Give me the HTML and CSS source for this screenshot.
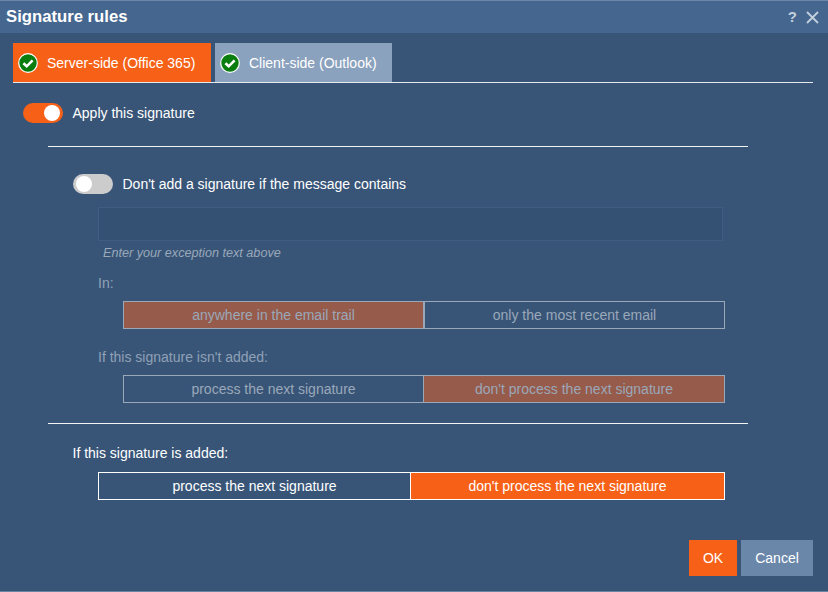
FILE: index.html
```html
<!DOCTYPE html>
<html lang="en">
<head>
<meta charset="utf-8">
<title>Signature rules</title>
<link rel="stylesheet" href="styles.css">
</head>
<body>
<div class="dialog">
  <header class="titlebar">
    <h1 class="title">Signature rules</h1>
    <div class="title-actions">
      <span class="help">?</span>
      <svg class="close" width="13" height="13" viewBox="0 0 13 13"><path d="M1 1L12 12M12 1L1 12" stroke="#c3cfdd" stroke-width="1.8" fill="none"/></svg>
    </div>
  </header>
  <main class="content">
    <nav class="tabs">
      <div class="tab tab-active">
        <svg class="check" width="20" height="20" viewBox="0 0 20 20"><circle cx="10" cy="10" r="9.3" fill="#0a7d0f" stroke="#fff" stroke-width="1.2"/><path d="M5.4 10.2L8.7 13.3L14.6 7.4" stroke="#fff" stroke-width="2.6" fill="none"/></svg>
        <span>Server-side (Office 365)</span>
      </div>
      <div class="tab tab-idle">
        <svg class="check" width="20" height="20" viewBox="0 0 20 20"><circle cx="10" cy="10" r="9.3" fill="#0a7d0f" stroke="#fff" stroke-width="1.2"/><path d="M5.4 10.2L8.7 13.3L14.6 7.4" stroke="#fff" stroke-width="2.6" fill="none"/></svg>
        <span>Client-side (Outlook)</span>
      </div>
    </nav>
    <div class="toggle-row apply-row">
      <span class="toggle toggle-on"><span class="knob"></span></span>
      <span>Apply this signature</span>
    </div>
    <hr class="rule rule-first">
    <section class="exception">
      <div class="toggle-row">
        <span class="toggle toggle-off"><span class="knob"></span></span>
        <span>Don't add a signature if the message contains</span>
      </div>
      <div class="exception-input"></div>
      <p class="hint">Enter your exception text above</p>
      <p class="label label-dim label-in">In:</p>
      <div class="segments segments-dim seg-in">
        <div class="seg seg-a seg-selected">anywhere in the email trail</div>
        <div class="seg seg-b">only the most recent email</div>
      </div>
      <p class="label label-dim label-notadded">If this signature isn't added:</p>
      <div class="segments segments-dim seg-notadded">
        <div class="seg seg-a">process the next signature</div>
        <div class="seg seg-b seg-selected">don't process the next signature</div>
      </div>
    </section>
    <hr class="rule rule-second">
    <p class="label label-added">If this signature is added:</p>
    <div class="segments seg-added">
      <div class="seg seg-a">process the next signature</div>
      <div class="seg seg-b seg-selected">don't process the next signature</div>
    </div>
    <footer class="actions">
      <button class="btn btn-ok">OK</button>
      <button class="btn btn-cancel">Cancel</button>
    </footer>
  </main>
</div>
</body>
</html>
```
FILE: styles.css
```css
* { box-sizing: border-box; }
html, body { margin: 0; padding: 0; }
body {
  width: 828px;
  height: 592px;
  overflow: hidden;
  font-family: "Liberation Sans", Arial, sans-serif;
  font-size: 14px;
  color: #fff;
  background: #385578;
}
.dialog {
  height: 592px;
  display: flex;
  flex-direction: column;
  background: #385578;
  border-bottom: 1px solid #69829f;
}
.titlebar {
  height: 33px;
  flex: none;
  display: flex;
  align-items: center;
  justify-content: space-between;
  padding: 0 9px 0 6px;
  background: #44668f;
  border-top: 1px solid #6b86a6;
}
.title {
  margin: 0;
  font-size: 16.7px;
  font-weight: 700;
  line-height: 32px;
  color: #fff;
}
.title-actions {
  display: flex;
  align-items: center;
  gap: 9px;
}
.help {
  font-size: 15px;
  font-weight: 700;
  line-height: 18px;
  color: #c3cfdd;
}
.content {
  flex: 1;
  display: flex;
  flex-direction: column;
  padding: 10px 15px 0 13px;
}
.tabs {
  display: flex;
  gap: 4px;
  height: 40px;
  border-bottom: 1px solid #e6e9ee;
}
.tab {
  height: 39px;
  display: flex;
  align-items: center;
  gap: 9px;
  padding-left: 5px;
  color: #fff;
}
.tab-active { width: 198px; background: #f66117; }
.tab-idle { width: 177px; background: #8ba2be; }
.check { flex: none; }
.toggle-row {
  display: flex;
  align-items: center;
  gap: 9.5px;
  height: 20px;
  line-height: 20px;
}
.apply-row { margin: 20px 0 0 10px; }
.toggle {
  width: 40px;
  height: 20px;
  flex: none;
  border-radius: 10px;
  display: flex;
  align-items: center;
  padding: 0 3px;
}
.toggle-on { background: #f66117; justify-content: flex-end; }
.toggle-off { background: #cccccc; justify-content: flex-start; }
.knob {
  width: 16px;
  height: 16px;
  border-radius: 50%;
  background: #fff;
}
.rule {
  height: 1px;
  width: 700px;
  margin: 0 0 0 35px;
  border: 0;
  background: #f2f3f5;
}
.rule-first { margin-top: 23px; }
.rule-second { margin-top: 20px; }
.exception {
  padding: 27px 0 0 60px;
}
.exception-input {
  width: 625px;
  height: 34px;
  margin: 13px 0 0 25px;
  background: #345073;
  border: 1px solid #3e5d83;
}
.hint {
  margin: 4px 0 0 30px;
  font-size: 12.65px;
  line-height: 16px;
  font-style: italic;
  color: #9aa8b9;
}
.label {
  margin: 0;
  font-size: 14px;
  line-height: 16px;
}
.label-dim { color: #90a1b6; }
.label-in { margin: 14px 0 0 25px; }
.label-notadded { margin: 20px 0 0 25px; }
.label-added { margin: 21px 0 0 59.5px; }
.segments {
  display: flex;
  height: 28px;
  line-height: 26px;
  text-align: center;
}
.seg {
  border: 1px solid #fff;
  height: 28px;
}
.seg + .seg { border-left: 0; }
.seg-selected { background: #f66117; }
.segments-dim .seg { border-color: #9aa8b9; color: #9aa8b9; }
.segments-dim .seg-selected { background: #965b4b; }
.seg-in { margin: 10px 0 0 50px; width: 602px; }
.seg-in .seg-a { width: 301px; }
.seg-in .seg-b { width: 301px; border-left: 1px solid #9aa8b9; }
.seg-notadded { margin: 10px 0 0 50px; width: 602px; }
.seg-notadded .seg-a { width: 300px; border-right: 0; }
.seg-notadded .seg-b { width: 302px; border-left: 1px solid #9aa8b9; }
.seg-added { margin: 11px 0 0 85px; width: 627px; }
.seg-added .seg-a { width: 312px; border-right: 0; }
.seg-added .seg-b { width: 315px; border-left: 1px solid #fff; }
.actions {
  display: flex;
  justify-content: flex-end;
  gap: 4px;
  margin-top: 40px;
}
.btn {
  height: 36px;
  border: 0;
  padding: 0;
  color: #fff;
  font: inherit;
}
.btn-ok { width: 48px; background: #f66117; }
.btn-cancel { width: 72px; background: #6a87aa; }
```
